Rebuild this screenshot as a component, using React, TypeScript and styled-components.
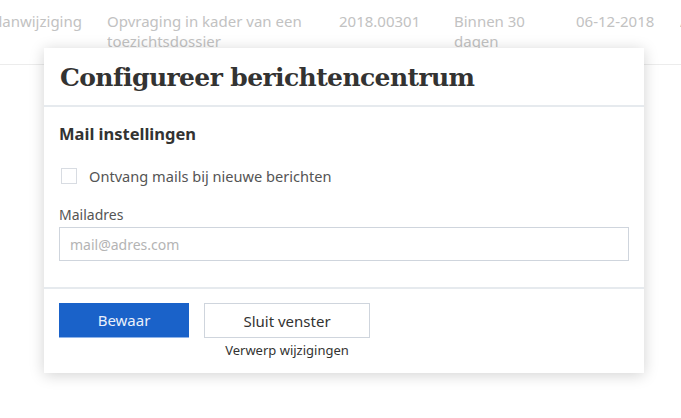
import React from "react";
import styled, { createGlobalStyle } from "styled-components";

const Global = createGlobalStyle`
  html, body { margin: 0; padding: 0; background: #ffffff; }
  body { font-family: "Noto Sans", "Open Sans", sans-serif; color: #333332; }
  * { box-sizing: border-box; }
`;

const Page = styled.div`
  position: relative;
  width: 681px;
  height: 418px;
  overflow: hidden;
  background: #fff;
`;

const BgRow = styled.div`
  display: grid;
  grid-template-columns: 107px 232px 115px 122px 104px 30px;
  height: 65px;
  padding-top: 11px;
  border-bottom: 1px solid #ececec;
  font-size: 15px;
  line-height: 20px;
  color: #c2c2c2;
`;

const Cell = styled.div<{ $clip?: boolean }>`
  display: flex;
  justify-content: ${(p) => (p.$clip ? "flex-end" : "flex-start")};
  overflow: hidden;
  white-space: ${(p) => (p.$clip ? "nowrap" : "normal")};
  padding-right: ${(p) => (p.$clip ? "25px" : "12px")};
`;

const Modal = styled.div`
  position: absolute;
  left: 44px;
  top: 48px;
  width: 600px;
  height: 325px;
  background: #fff;
  box-shadow: 0 2px 14px rgba(0, 0, 0, 0.18);
  display: flex;
  flex-direction: column;
`;

const Header = styled.div`
  height: 59px;
  padding: 14px 16px 0;
  border-bottom: 2px solid #e6eaee;
`;

const Title = styled.h1`
  margin: 0;
  font-family: "DejaVu Serif", serif;
  font-weight: bold;
  font-size: 25px;
  line-height: 32px;
  color: #333332;
  letter-spacing: -0.6px;
`;

const Body = styled.div`
  padding: 15px 15px 0;
  height: 182px;
  border-bottom: 2px solid #e6eaee;
  display: flex;
  flex-direction: column;
`;

const SubTitle = styled.h2`
  margin: 0;
  font-size: 16.5px;
  font-weight: bold;
  line-height: 24px;
  color: #333332;
`;

const CheckRow = styled.label`
  display: flex;
  align-items: center;
  gap: 12px;
  margin-top: 20px;
  padding-left: 2px;
  font-size: 14.6px;
  line-height: 20px;
  color: #555;
`;

const Box = styled.span`
  width: 16px;
  height: 16px;
  border: 1px solid #d8dce2;
  background: #fff;
`;

const FieldLabel = styled.div`
  margin-top: 20px;
  font-size: 14px;
  line-height: 18px;
  color: #555;
`;

const Input = styled.input`
  margin-top: 3px;
  width: 570px;
  height: 34px;
  border: 1px solid #cfd5dd;
  padding: 0 10px;
  font-family: "Noto Sans", sans-serif;
  font-size: 14px;
  color: #333;
  outline: none;
  &::placeholder { color: #b4b4b4; }
`;

const Footer = styled.div`
  padding: 14px 15px 0;
  display: flex;
  gap: 15px;
  align-items: flex-start;
`;

const Btn = styled.button<{ $primary?: boolean }>`
  height: 35px;
  width: ${(p) => (p.$primary ? "130px" : "166px")};
  border: ${(p) => (p.$primary ? "none" : "1px solid #cfd5dd")};
  border-bottom: ${(p) => (p.$primary ? "1px solid #8fb3e8" : "1px solid #cfd5dd")};
  background: ${(p) => (p.$primary ? "#1a62c9" : "#fff")};
  color: ${(p) => (p.$primary ? "#e9f0fb" : "#333332")};
  font-family: "Noto Sans", sans-serif;
  font-size: 15px;
  padding: 0;
`;

const SecondaryGroup = styled.div`
  display: flex;
  flex-direction: column;
  align-items: center;
  gap: 3px;
`;

const SubLink = styled.span`
  font-size: 13px;
  line-height: 18px;
  color: #333332;
`;

export default function App() {
  return (
    <Page>
      <Global />
      <BgRow>
        <Cell $clip>Bestemmingsplanwijziging</Cell>
        <Cell>Opvraging in kader van een toezichtsdossier</Cell>
        <Cell>2018.00301</Cell>
        <Cell>Binnen 30 dagen</Cell>
        <Cell>06-12-2018</Cell>
        <Cell>A</Cell>
      </BgRow>
      <Modal role="dialog">
        <Header>
          <Title>Configureer berichtencentrum</Title>
        </Header>
        <Body>
          <SubTitle>Mail instellingen</SubTitle>
          <CheckRow>
            <Box />
            Ontvang mails bij nieuwe berichten
          </CheckRow>
          <FieldLabel>Mailadres</FieldLabel>
          <Input placeholder="mail@adres.com" />
        </Body>
        <Footer>
          <Btn $primary>Bewaar</Btn>
          <SecondaryGroup>
            <Btn>Sluit venster</Btn>
            <SubLink>Verwerp wijzigingen</SubLink>
          </SecondaryGroup>
        </Footer>
      </Modal>
    </Page>
  );
}
